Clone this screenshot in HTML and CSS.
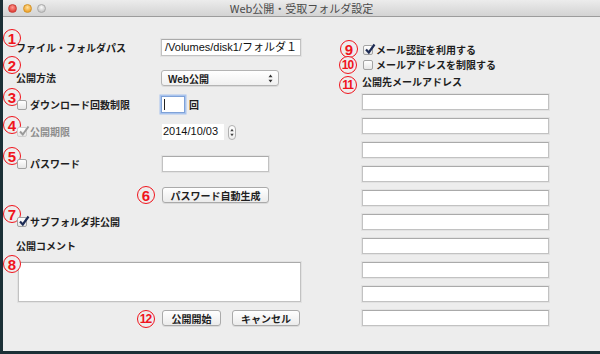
FILE: index.html
```html
<!DOCTYPE html>
<html>

<head>
    <meta charset="UTF-8">
    <title>Web公開・受取フォルダ設定</title>
    <link rel="stylesheet" href="styles.css">
</head>

<body>
    <!-- window -->
    <div class="window">
        <!-- title bar -->
        <div class="titlebar">
            <div class="lights">
                <span class="light close"></span>
                <span class="light minimize"></span>
                <span class="light zoom"></span>
            </div>
            <div class="title">Web公開・受取フォルダ設定</div>
            <div></div>
        </div>

        <div class="content">
            <!-- left column -->
            <div class="col-left">
                <div class="row row-path">
                    <span class="badge b1">1</span>
                    <span class="label">ファイル・フォルダパス</span>
                    <div class="field field-path">/Volumes/disk1/フォルダ１</div>
                </div>

                <div class="row row-method">
                    <span class="badge b2">2</span>
                    <span class="label">公開方法</span>
                    <div class="popup">
                        <span>Web公開</span>
                        <svg width="5" height="9" viewBox="0 0 5 9"><path d="M2.5 0.5 L4.5 3.2 H0.5 Z M2.5 8.5 L4.5 5.8 H0.5 Z" fill="#333"/></svg>
                    </div>
                </div>

                <div class="row row-count">
                    <span class="badge b3">3</span>
                    <div class="check">
                        <span class="box"></span>
                        <span class="label">ダウンロード回数制限</span>
                    </div>
                    <div class="inline">
                        <div class="field field-count"><span class="caret"></span></div>
                        <span class="label unit">回</span>
                    </div>
                </div>

                <div class="row row-expiry">
                    <span class="badge b4">4</span>
                    <div class="check disabled">
                        <span class="box box-off">
                            <svg class="tick" width="12" height="12" viewBox="0 0 12 12"><path d="M2 6.5 L4.8 9.5 L10.5 1.5" fill="none" stroke="#9a9a9a" stroke-width="2"/></svg>
                        </span>
                        <span class="label">公開期限</span>
                    </div>
                    <div class="inline">
                        <div class="field field-date">2014/10/03</div>
                        <div class="stepper">
                            <svg width="7" height="15" viewBox="0 0 7 15"><path d="M3.5 3 L5.5 6 H1.5 Z M3.5 12 L5.5 9 H1.5 Z" fill="#444"/></svg>
                        </div>
                    </div>
                </div>

                <div class="row row-password">
                    <span class="badge b5">5</span>
                    <div class="check">
                        <span class="box"></span>
                        <span class="label">パスワード</span>
                    </div>
                    <div class="field field-password"></div>
                </div>

                <div class="row row-generate">
                    <span class="badge b6">6</span>
                    <span></span>
                    <div class="btn btn-generate">パスワード自動生成</div>
                </div>

                <div class="row row-subfolder">
                    <span class="badge b7">7</span>
                    <div class="check">
                        <span class="box">
                            <svg class="tick" width="12" height="12" viewBox="0 0 12 12"><path d="M2 6.5 L4.8 9.5 L10.5 1.5" fill="none" stroke="#1d2c55" stroke-width="2.2"/></svg>
                        </span>
                        <span class="label">サブフォルダ非公開</span>
                    </div>
                </div>

                <div class="row row-comment-label">
                    <span class="label">公開コメント</span>
                </div>

                <div class="row row-comment">
                    <span class="badge b8">8</span>
                    <div class="field comment"></div>
                </div>

                <div class="row row-actions">
                    <span class="badge wide b12">12</span>
                    <span></span>
                    <div class="actions">
                        <div class="btn btn-start">公開開始</div>
                        <div class="btn btn-cancel">キャンセル</div>
                    </div>
                </div>
            </div>

            <!-- right column -->
            <div class="col-right">
                <div class="rrow rrow-auth">
                    <span class="badge b9">9</span>
                    <div class="check">
                        <span class="box">
                            <svg class="tick" width="12" height="12" viewBox="0 0 12 12"><path d="M2 6.5 L4.8 9.5 L10.5 1.5" fill="none" stroke="#1d2c55" stroke-width="2.2"/></svg>
                        </span>
                        <span class="label">メール認証を利用する</span>
                    </div>
                </div>
                <div class="rrow rrow-limit">
                    <span class="badge wide b10">10</span>
                    <div class="check">
                        <span class="box"></span>
                        <span class="label">メールアドレスを制限する</span>
                    </div>
                </div>
                <div class="rrow rrow-list-label">
                    <span class="badge wide b11">11</span>
                    <span class="label">公開先メールアドレス</span>
                </div>
                <div class="email-list">
                    <div class="field email"></div>
                    <div class="field email"></div>
                    <div class="field email"></div>
                    <div class="field email"></div>
                    <div class="field email"></div>
                    <div class="field email"></div>
                    <div class="field email"></div>
                    <div class="field email"></div>
                    <div class="field email"></div>
                    <div class="field email"></div>
                </div>
            </div>
        </div>
    </div>
</body>

</html>
```

FILE: styles.css
```css
body {
    margin: 0;
    background-color: #1c3036;
    font-family: "Noto Sans CJK JP", sans-serif;
}

* {
    box-sizing: border-box;
}

.window {
    width: 597px;
    height: 351px;
    margin-left: 3px;
    background-color: #ededed;
    display: flex;
    flex-direction: column;
}

/* title bar */
.titlebar {
    height: 17px;
    flex-shrink: 0;
    display: grid;
    grid-template-columns: 1fr auto 1fr;
    align-items: center;
    background: linear-gradient(#ececec, #d3d3d3);
    border-bottom: 1px solid #9c9c9c;
}

.lights {
    display: flex;
    gap: 5.5px;
    padding-left: 5px;
}

.light {
    width: 9px;
    height: 9px;
    border-radius: 50%;
}

.close {
    background: radial-gradient(circle at 50% 35%, #ff9b93, #e3443c 70%);
    border: 1px solid #c9403a;
}

.minimize {
    background: radial-gradient(circle at 50% 35%, #ffe1a0, #f0a530 70%);
    border: 1px solid #d39428;
}

.zoom {
    background: radial-gradient(circle at 50% 35%, #fafafa, #c9c9c9 70%);
    border: 1px solid #a9a9a9;
}

.title {
    font-size: 11px;
    line-height: 1;
    color: #4a4a4a;
}

/* layout */
.content {
    flex: 1;
    display: grid;
    grid-template-columns: 359px 1fr;
}

.col-left {
    display: flex;
    flex-direction: column;
    padding: 22px 0 0 13px;
}

.row {
    position: relative;
    display: grid;
    grid-template-columns: 145px auto;
    align-items: center;
    height: 16px;
}

.row-path { height: 17px; }
.row-method { margin-top: 14px; }
.row-count { margin-top: 10px; height: 17px; }
.row-expiry { margin-top: 11px; }
.row-password { margin-top: 16px; }
.row-generate { margin-top: 15px; }
.row-subfolder { margin-top: 11px; }
.row-comment-label { margin-top: 8px; }
.row-comment { margin-top: 8px; height: 40px; display: block; }
.row-actions { margin-top: 8px; }

.col-right {
    display: flex;
    flex-direction: column;
    padding-top: 25px;
}

.rrow {
    position: relative;
    display: flex;
    align-items: center;
    height: 15px;
}

.rrow-list-label { margin-top: 2px; }

.email-list {
    display: flex;
    flex-direction: column;
    gap: 8px;
    margin-top: 5px;
}

/* text */
.label {
    font-size: 10px;
    font-weight: bold;
    line-height: 1;
    color: #1e1e1e;
    white-space: nowrap;
}

.disabled .label {
    color: #8e8e8e;
}

.unit {
    margin-left: 4px;
}

/* annotation numbers */
.badge {
    position: absolute;
    width: 18px;
    height: 18px;
    border: 1.3px solid #f0141c;
    border-radius: 50%;
    display: flex;
    align-items: center;
    justify-content: center;
    color: #f0141c;
    font-family: "Liberation Sans", sans-serif;
    font-weight: bold;
    font-size: 15px;
    line-height: 1;
    background: #ededed;
}

.badge.wide {
    font-size: 12px;
    letter-spacing: -1px;
    padding-right: 1px;
}

.b1 { top: -10px; left: -13px; }
.b2 { top: -14px; left: -13px; }
.b3 { top: -8px; left: -13px; }
.b4 { top: -8px; left: -13px; }
.b5 { top: -9px; left: -13px; }
.b6 { top: -1px; left: 121px; }
.b7 { top: -9px; left: -13px; }
.b8 { top: -7px; left: -13px; }
.b12 { top: 0; left: 121px; }
.b9 { top: -2px; left: -22px; }
.b10 { top: -1px; left: -23px; }
.b11 { top: 2px; left: -23px; }

/* controls */
.field {
    height: 16px;
    background-color: #fff;
    border: 1px solid #c2c2c2;
    border-top-color: #aaaaaa;
    box-shadow: 0 0 0 1px #e2e2e2;
    font-family: "Liberation Sans", "Noto Sans CJK JP", sans-serif;
    font-size: 11px;
    line-height: 14px;
    padding-left: 3px;
    color: #111;
    white-space: nowrap;
    overflow: hidden;
}

.field-path {
    width: 140px;
    height: 17px;
    line-height: 15px;
}

.inline {
    display: flex;
    align-items: center;
}

.field-count {
    width: 24px;
    height: 17px;
    border-color: #7fa2d8;
    box-shadow: 0 0 0 1.5px #a9c4ee;
    position: relative;
}

.caret {
    position: absolute;
    left: 2px;
    top: 2px;
    width: 1px;
    height: 11px;
    background-color: #222;
}

.field-date {
    width: 62px;
    border: none;
    box-shadow: none;
    padding-left: 1px;
    margin-left: 1px;
}

.stepper {
    width: 8px;
    height: 15px;
    margin-left: 4px;
    border: 1px solid #b0b0b0;
    border-radius: 4px;
    background: linear-gradient(#fff, #eee);
    display: flex;
    align-items: center;
    justify-content: center;
}

.field-password {
    width: 107px;
    margin-left: 1px;
}

.comment {
    width: 283px;
    height: 40px;
    margin-left: 2px;
}

.email {
    width: 187px;
}

.check {
    display: flex;
    align-items: center;
    gap: 3px;
    margin-left: 1px;
}

.box {
    position: relative;
    width: 10px;
    height: 10px;
    flex-shrink: 0;
    border: 1px solid #a3a3a3;
    border-radius: 2px;
    background: linear-gradient(#ffffff, #e6e6e6);
}

.box-off {
    border-color: #cfcfcf;
}

.tick {
    position: absolute;
    left: 0;
    top: -3px;
}

.popup {
    width: 118px;
    height: 16px;
    border: 1px solid #b4b4b4;
    border-radius: 3px;
    background: linear-gradient(#ffffff, #f0f0f0);
    box-shadow: 0 1px 0 rgba(0, 0, 0, 0.08);
    display: flex;
    align-items: center;
    justify-content: space-between;
    padding: 0 5px 0 6px;
    font-family: "Liberation Sans", "Noto Sans CJK JP", sans-serif;
    font-size: 10px;
    font-weight: bold;
    color: #1e1e1e;
}

.btn {
    height: 16px;
    border: 1px solid #aaaaaa;
    border-radius: 3px;
    background: linear-gradient(#ffffff, #ebebeb);
    box-shadow: 0 1px 0 rgba(0, 0, 0, 0.08);
    display: flex;
    align-items: center;
    justify-content: center;
    font-size: 10px;
    font-weight: bold;
    color: #1e1e1e;
    white-space: nowrap;
}

.btn-generate {
    width: 107px;
    margin-left: 1px;
}

.actions {
    display: flex;
    gap: 11px;
    margin-left: 1px;
}

.btn-start {
    width: 59px;
}

.btn-cancel {
    width: 68px;
}
```
